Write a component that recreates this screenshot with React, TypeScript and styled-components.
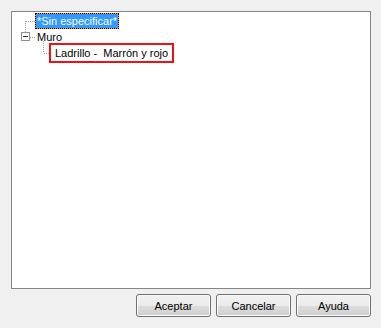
import React from "react"
import styled, { createGlobalStyle } from "styled-components"

const GlobalStyle = createGlobalStyle`
  html, body {
    margin: 0;
    padding: 0;
    background: #f0f0f0;
  }
  body {
    font-family: "Liberation Sans", Arial, sans-serif;
    font-size: 11px;
  }
`

const Dialog = styled.div`
  width: 381px;
  height: 328px;
  box-sizing: border-box;
  padding: 11px 10px 0 11px;
  display: flex;
  flex-direction: column;
  background: #f0f0f0;
`

const TreeBox = styled.div`
  width: 360px;
  height: 278px;
  box-sizing: border-box;
  border: 1px solid #828790;
  background: #ffffff;
  padding-top: 1px;
  display: flex;
  flex-direction: column;
`

const Row = styled.div<{ level: number }>`
  height: 16px;
  display: flex;
  align-items: center;
  padding-left: ${(p) => 5 + p.level * 18}px;
`

const Connector = styled.svg`
  width: 18px;
  height: 16px;
  flex: none;
  overflow: visible;
`

const Label = styled.span<{ selected?: boolean; marked?: boolean }>`
  position: relative;
  height: 16px;
  line-height: 16px;
  padding: 0 2px;
  box-sizing: border-box;
  white-space: pre;
  color: #000000;
  ${(p) =>
    p.selected &&
    `
    color: #ffffff;
    line-height: 14px;
    padding: 0 1px;
    border: 1px dotted #000000;
    background: linear-gradient(#3399ff, #3399ff) padding-box, #e39a2f border-box;
  `}
  ${(p) =>
    p.marked &&
    `
    &::after {
      content: "";
      position: absolute;
      top: -2px;
      bottom: -2px;
      left: -4px;
      right: -4px;
      border: 2px solid #ee1111;
    }
  `}
`

const ButtonBar = styled.div`
  margin-top: 5px;
  display: flex;
  justify-content: flex-end;
  gap: 5px;
`

const Button = styled.button`
  width: 75px;
  height: 23px;
  padding: 0;
  border: 1px solid #707070;
  border-radius: 3px;
  font-family: "Liberation Sans", Arial, sans-serif;
  font-size: 11px;
  color: #000000;
  background: linear-gradient(#f2f2f2 0%, #ebebeb 50%, #dddddd 51%, #cfcfcf 100%);
  box-shadow: inset 0 0 0 1px #fcfcfc;
`

const dot = { stroke: "#a0a0a0", strokeWidth: 1, strokeDasharray: "1 1", shapeRendering: "crispEdges" as const }

const SiblingLine = () => (
  <Connector viewBox="0 0 18 16">
    <line x1="8.5" y1="8" x2="8.5" y2="16" style={dot} />
    <line x1="9" y1="8.5" x2="18" y2="8.5" style={dot} />
  </Connector>
)

const ExpandedLast = () => (
  <Connector viewBox="0 0 18 16">
    <line x1="8.5" y1="0" x2="8.5" y2="3" style={dot} />
    <rect x="4.5" y="3.5" width="8" height="8" fill="#ffffff" stroke="#919191" shapeRendering="crispEdges" />
    <line x1="6" y1="7.5" x2="11" y2="7.5" stroke="#333" shapeRendering="crispEdges" />
    <line x1="13" y1="8.5" x2="18" y2="8.5" style={dot} />
  </Connector>
)

const LastChild = () => (
  <Connector viewBox="0 0 18 16">
    <line x1="8.5" y1="-4" x2="8.5" y2="8" style={dot} />
    <line x1="9" y1="8.5" x2="14" y2="8.5" style={dot} />
  </Connector>
)

export default function App() {
  return (
    <Dialog>
      <GlobalStyle />
      <TreeBox>
        <Row level={0}>
          <SiblingLine />
          <Label selected>*Sin especificar*</Label>
        </Row>
        <Row level={0}>
          <ExpandedLast />
          <Label>Muro</Label>
        </Row>
        <Row level={1}>
          <LastChild />
          <Label marked>{"Ladrillo -  Marrón y rojo"}</Label>
        </Row>
      </TreeBox>
      <ButtonBar>
        <Button>Aceptar</Button>
        <Button>Cancelar</Button>
        <Button>Ayuda</Button>
      </ButtonBar>
    </Dialog>
  )
}
